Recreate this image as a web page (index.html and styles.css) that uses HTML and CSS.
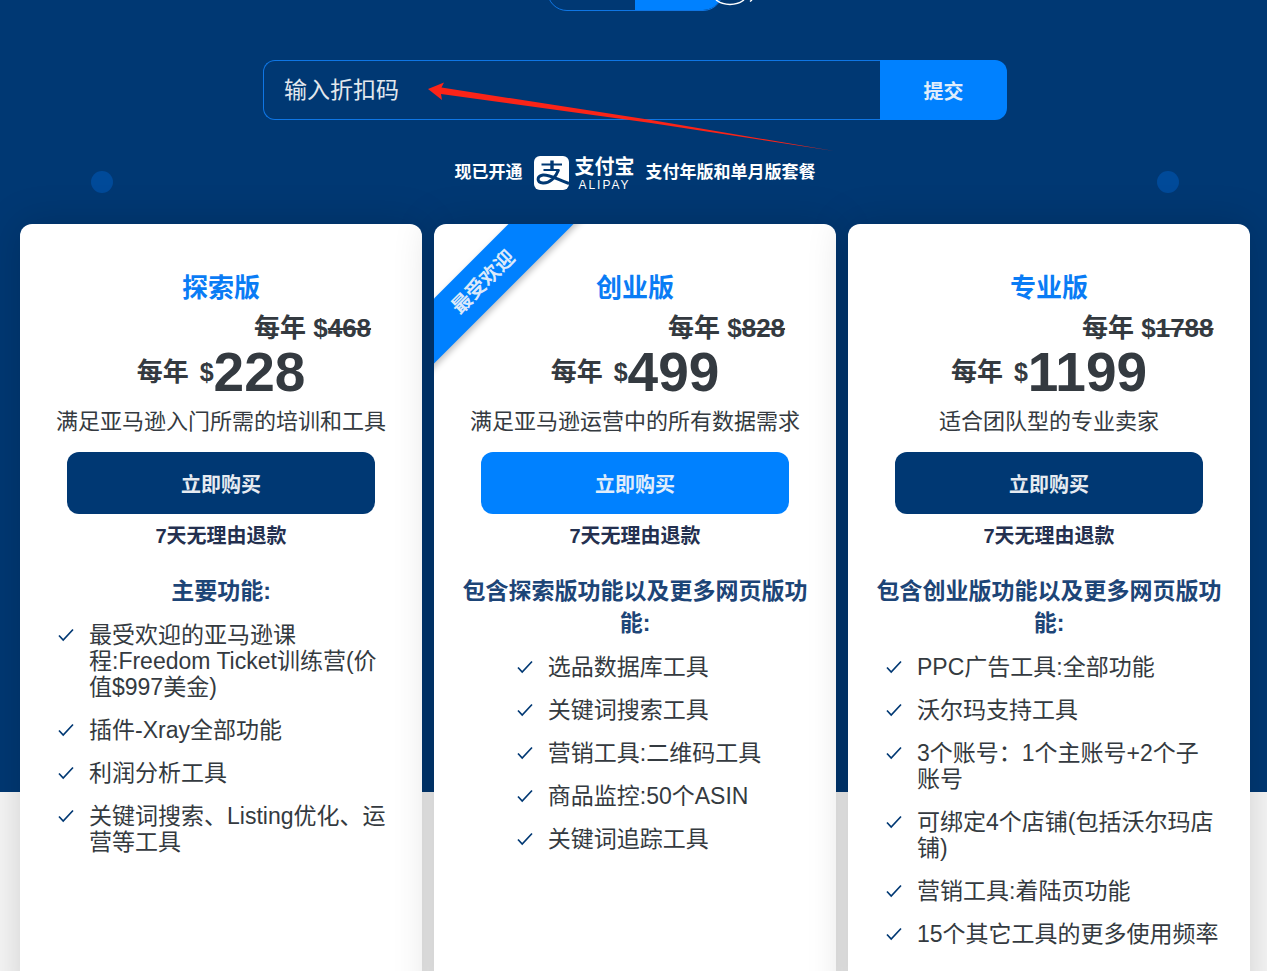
FILE: index.html
```html
<!DOCTYPE html>
<html lang="zh-CN">
<head>
    <meta charset="UTF-8">
    <meta name="viewport" content="width=device-width, initial-scale=1.0">
    <title>套餐价格</title>
    <link rel="stylesheet" href="styles.css">
</head>

<body>
    <svg class="defs" width="0" height="0" aria-hidden="true">
        <symbol id="check" viewBox="0 0 16 14"><path d="M1 7.5 L5.2 12 L15 1.5" fill="none" stroke="#003873" stroke-width="1.7"/></symbol>
    </svg>

    <main class="page">
        <!-- billing period switch -->
        <div class="period">
            <div class="switch"><span></span><span class="on"></span></div>
            <svg class="swirl" width="42" height="8" viewBox="0 0 42 8"><path d="M2 0 Q8 4.500 16 4.500 Q24 4.500 30 0 M36 1.500 L38 0" fill="none" stroke="#fff" stroke-width="1.500"/></svg>
        </div>

        <form class="coupon">
            <input type="text" class="code" placeholder="输入折扣码" aria-label="输入折扣码">
            <button type="button" class="submit">提交</button>
            <svg class="arrow" width="410" height="72" viewBox="0 0 410 72">
                <path d="M0 9 L16 2.500 L13.500 7.500 L223 40 L406 71 L223 43 L13 14 L14 20 Z" fill="#fb2418"/>
            </svg>
        </form>

        <div class="notice">
            <i class="dot"></i>
            <p class="pay">
                <span>现已开通</span>
                <span class="alipay">
                    <svg width="36" height="34" viewBox="0 0 36 34">
                        <rect width="35" height="34" rx="6" fill="#fff"/>
                        <g fill="none" stroke="#003873">
                            <path d="M7.500 8.500 H28 M9.500 14 H25.500" stroke-width="2.200"/>
                            <path d="M18 4.500 V14" stroke-width="3.400"/>
                            <path d="M24.500 14 C22 21 15.500 27.500 9 27 C2.500 26.500 2.500 20 9 19 C16 18.500 22 23 35 27.500" stroke-width="3"/>
                        </g>
                    </svg>
                    <span class="wordmark"><b>支付宝</b><small>ALIPAY</small></span>
                </span>
                <span>支付年版和单月版套餐</span>
            </p>
            <i class="dot"></i>
        </div>

        <div class="plans">
            <section class="card">
                <h2 class="name">探索版</h2>
                <p class="old">每年 $<s>468</s></p>
                <p class="price"><span class="unit">每年</span><span class="dollar">$</span>228</p>
                <p class="desc">满足亚马逊入门所需的培训和工具</p>
                <button type="button" class="buy">立即购买</button>
                <p class="refund">7天无理由退款</p>
                <h3 class="title">主要功能:</h3>
                <ul class="features">
                    <li><svg><use href="#check"/></svg><span>最受欢迎的亚马逊课程:Freedom Ticket训练营(价值$997美金)</span></li>
                    <li><svg><use href="#check"/></svg><span>插件-Xray全部功能</span></li>
                    <li><svg><use href="#check"/></svg><span>利润分析工具</span></li>
                    <li><svg><use href="#check"/></svg><span>关键词搜索、Listing优化、运营等工具</span></li>
                </ul>
            </section>

            <section class="card">
                <div class="corner"><span class="ribbon">最受欢迎</span></div>
                <h2 class="name">创业版</h2>
                <p class="old">每年 $<s>828</s></p>
                <p class="price"><span class="unit">每年</span><span class="dollar">$</span>499</p>
                <p class="desc">满足亚马逊运营中的所有数据需求</p>
                <button type="button" class="buy hot">立即购买</button>
                <p class="refund">7天无理由退款</p>
                <h3 class="title">包含探索版功能以及更多网页版功能:</h3>
                <ul class="features">
                    <li><svg><use href="#check"/></svg><span>选品数据库工具</span></li>
                    <li><svg><use href="#check"/></svg><span>关键词搜索工具</span></li>
                    <li><svg><use href="#check"/></svg><span>营销工具:二维码工具</span></li>
                    <li><svg><use href="#check"/></svg><span>商品监控:50个ASIN</span></li>
                    <li><svg><use href="#check"/></svg><span>关键词追踪工具</span></li>
                </ul>
            </section>

            <section class="card">
                <h2 class="name">专业版</h2>
                <p class="old">每年 $<s>1788</s></p>
                <p class="price"><span class="unit">每年</span><span class="dollar">$</span>1199</p>
                <p class="desc">适合团队型的专业卖家</p>
                <button type="button" class="buy">立即购买</button>
                <p class="refund">7天无理由退款</p>
                <h3 class="title">包含创业版功能以及更多网页版功能:</h3>
                <ul class="features">
                    <li><svg><use href="#check"/></svg><span>PPC广告工具:全部功能</span></li>
                    <li><svg><use href="#check"/></svg><span>沃尔玛支持工具</span></li>
                    <li><svg><use href="#check"/></svg><span>3个账号：1个主账号+2个子账号</span></li>
                    <li><svg><use href="#check"/></svg><span>可绑定4个店铺(包括沃尔玛店铺)</span></li>
                    <li><svg><use href="#check"/></svg><span>营销工具:着陆页功能</span></li>
                    <li><svg><use href="#check"/></svg><span>15个其它工具的更多使用频率</span></li>
                </ul>
            </section>
        </div>
    </main>
</body>
</html>
```
FILE: styles.css
```css
* { box-sizing: border-box; margin: 0; padding: 0; }
body { background: #f7f7f7; color: #343a40; font-family: "Liberation Sans", "Noto Sans CJK SC", sans-serif; }
button, input { font: inherit; border: 0; }
.defs { position: absolute; }

.page { padding: 0 17px 60px 20px; background: linear-gradient(#003873 792px, #f7f7f7 792px); overflow: hidden; }

/* switch */
.period { position: relative; display: flex; justify-content: center; align-items: flex-end; height: 11px; }
.switch { display: flex; flex: none; width: 176px; height: 60px; border: 1px solid #0f76e4; border-radius: 20px; overflow: hidden; }
.switch span { flex: 1; }
.switch .on { background: #0081ff; }
.swirl { position: absolute; top: 0; left: calc(50% + 79px); }

/* discount code */
.coupon { position: relative; display: flex; width: 744px; max-width: 100%; height: 60px; margin: 49px auto 35px; }
.code { flex: 1; min-width: 0; padding: 0 20px; background: transparent; border: 1px solid #0f76e4; border-right: 0; border-radius: 12px 0 0 12px; color: #fff; font-size: 23px; }
.code::placeholder { color: #e3e8ee; opacity: 1; }
.submit { width: 127px; background: #0081ff; border-radius: 0 12px 12px 0; color: #e0edfb; font-size: 20px; font-weight: bold; }
.arrow { position: absolute; left: 165px; top: 20px; pointer-events: none; }

.notice { display: flex; justify-content: space-between; align-items: flex-end; height: 38px; margin-bottom: 31px; padding: 0 71px; }
.dot { width: 22px; height: 22px; border-radius: 50%; background: #004a99; }
.pay { display: flex; align-items: center; align-self: flex-start; gap: 11px; height: 36px; color: #fff; font-size: 17px; font-weight: bold; line-height: 24px; }
.alipay { display: flex; gap: 5px; }
.wordmark { display: flex; flex-direction: column; align-items: center; }
.wordmark b { font-size: 20px; font-weight: bold; line-height: 23px; }
.wordmark small { font-size: 12px; font-weight: normal; line-height: 12px; letter-spacing: 2px; }

/* plans */
.plans { display: grid; grid-template-columns: repeat(3, 1fr); gap: 12px; }
.card { position: relative; padding: 47px 28px 50px; background: #fff; border-radius: 12px; box-shadow: 0 0 40px rgba(0,0,0,.17); text-align: center; }
.name { margin-bottom: 6px; color: #0a7cf5; font-size: 26px; line-height: 34px; }
.old { margin-left: calc(50% + 33px); font-size: 26px; font-weight: bold; line-height: 34px; text-align: left; white-space: nowrap; }
.price { display: flex; justify-content: center; align-items: center; font-size: 55px; font-weight: bold; line-height: 54px; white-space: nowrap; }
.price span { font-size: 26px; line-height: 32px; }
.price .dollar { margin-left: 11px; font-size: 25px; }
.desc { margin: 7px -10px 14px; font-size: 22px; line-height: 32px; }
.buy { display: block; width: calc(100% - 38px); height: 62px; margin: 0 auto 10px; background: #003873; border-radius: 12px; color: #e6ebf1; font-size: 20px; font-weight: bold; }
.buy.hot { background: #0081ff; color: #e0edfb; }
.refund { margin-bottom: 27px; color: #24304f; font-size: 20px; font-weight: bold; line-height: 24px; }
.title { margin-bottom: 15px; color: #1d4577; font-size: 23px; line-height: 32px; }

.features { width: fit-content; margin: 0 auto; padding: 0 2px 0 10px; list-style: none; font-size: 23px; line-height: 26px; text-align: left; }
.features li { display: flex; gap: 15px; margin-bottom: 17px; }
.features svg { flex: none; width: 16px; height: 14px; margin-top: 6px; }

.corner { position: absolute; left: 0; top: 0; width: 160px; height: 160px; border-radius: 12px 0 0 0; overflow: hidden; }
.ribbon { position: absolute; left: -71px; top: 35px; width: 240px; background: #0081ff; box-shadow: 0 3px 6px rgba(0,0,0,.25); color: #dbe9fa; font-size: 20px; font-weight: bold; line-height: 46px; transform: rotate(-45deg); }
```
